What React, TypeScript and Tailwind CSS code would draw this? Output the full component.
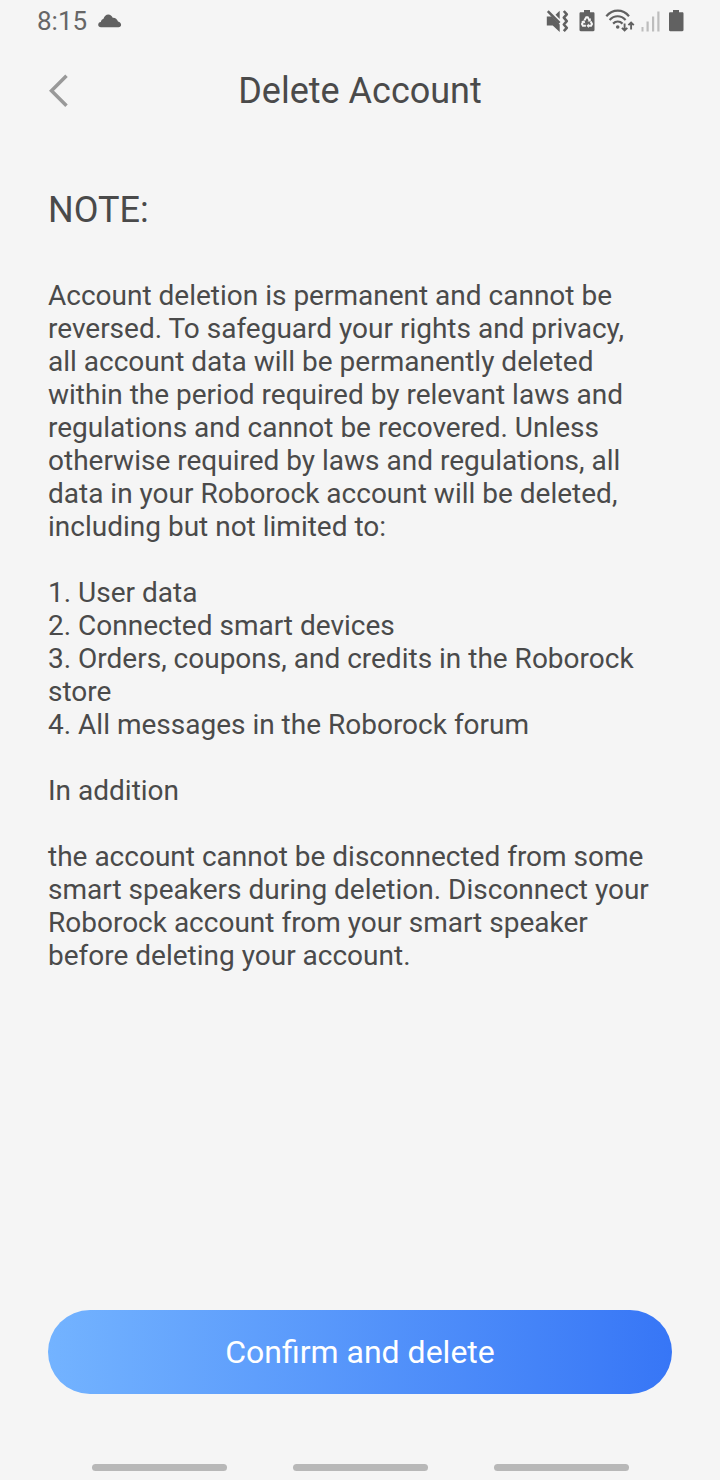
const items = [
  "User data",
  "Connected smart devices",
  "Orders, coupons, and credits in the Roborock store",
  "All messages in the Roborock forum",
];

function CloudIcon() {
  return (
    <svg width="24" height="14" viewBox="0 0 24 14" fill="#616161" role="img" aria-label="Cloud">
      <path d="M3 13.2C1.2 13.2.2 12.1.2 10.7c0-1.5 1.1-2.5 2.6-2.7C3.2 6 4.3 5.2 5.5 4.8 6.3 2.2 8 .4 10.3.4c2 0 3.7 1.300 4.400 3.300 2.400-.2 4.400 1 5.300 3.800 1.900.5 3.100 1.700 3.100 3.200 0 1.400-1 2.500-2.600 2.500z" />
    </svg>
  );
}

function MutedVibrateIcon() {
  return (
    <svg width="24" height="24" viewBox="0 0 24 24" role="img" aria-label="Muted, vibrate">
      <path d="M.8 7.500h5L13.700 15.500V23l-7-6.500H.8z" fill="#616161" />
      <path d="M13.700 1.800v8.200L9.500 5.800z" fill="#616161" />
      <path d="M1.800 2.200 13.500 14" stroke="#616161" strokeWidth="2.600" fill="none" />
      <path d="M17.800 2l3 3.300-3 3.400 3 3.400-3 3.400 3 3.300-3 3.400" stroke="#616161" strokeWidth="2.600" strokeLinejoin="round" fill="none" />
    </svg>
  );
}

function RecycleBatteryIcon() {
  return (
    <svg width="16" height="24" viewBox="0 0 16 24" role="img" aria-label="Battery saver">
      <path d="M5 1h6v2.200h3.300c.7 0 1.200.5 1.200 1.200V21c0 .7-.5 1.200-1.200 1.200H1.700C1 22.200.5 21.700.5 21V4.400c0-.7.5-1.200 1.200-1.200H5z" fill="#616161" />
      <g stroke="#f5f5f5" strokeWidth="2" fill="none">
        <path d="M5.500 11.200l1.800-3h1.400l1.800 3M4.300 12.600l-1.300 2.400.9 1.700h3M11.700 12.600l1.300 2.400-.9 1.700h-3" />
      </g>
      <path d="M11.800 9v3.500H8.500zM9.800 14.500v4.400l-2.300-2.200zM2.200 12.200l3.300-.9.800 3.200z" fill="#f5f5f5" />
    </svg>
  );
}

function WifiIcon() {
  return (
    <svg width="30" height="24" viewBox="0 0 30 24" role="img" aria-label="Wi-Fi">
      <g fill="none" stroke="#616161" strokeWidth="2.200">
        <path d="M1.300 7.200C7.800-.2 17.800-.2 24 7.200M4.600 11c4.600-5 11.400-5 16 0M8.100 14.600c2.800-2.800 6.600-2.800 9.400 0" />
        <path d="M19.600 14.500v7M16.900 18.800l2.700 2.700 2.700-2.700M26.100 20.500v-7M23.400 16.200l2.700-2.700 2.700 2.700" strokeWidth="1.900" />
      </g>
      <circle cx="12.700" cy="18" r="1.800" fill="#616161" />
    </svg>
  );
}

function SignalIcon() {
  return (
    <svg width="20" height="24" viewBox="0 0 20 24" fill="#bdbdbd" role="img" aria-label="Signal">
      <path d="M.5 18h2v4.500h-2zM5.500 12.500h2.200v10H5.500zM11 7.500h2.200v15H11zM16.300 2.500h2.200v20h-2.200z" />
    </svg>
  );
}

function BatteryIcon() {
  return (
    <svg width="16" height="24" viewBox="0 0 16 24" fill="#616161" role="img" aria-label="Battery">
      <path d="M5 1h6v2.200h3.300c.7 0 1.200.5 1.200 1.200V21c0 .7-.5 1.200-1.200 1.200H2.200C1.500 22.200 1 21.700 1 21V4.400c0-.7.5-1.200 1.200-1.200H5z" />
    </svg>
  );
}

export default function App() {
  return (
    <div className="flex min-h-screen flex-col bg-[#f5f5f5] font-[Roboto,sans-serif] text-[#4a4a4a]">
      <div className="flex h-[42px] items-center justify-between pr-9 pl-[37px] text-[#666]">
        <div className="flex items-center gap-[11px]">
          <span className="text-[26px] leading-8">8:15</span>
          <CloudIcon />
        </div>
        <div className="flex items-center">
          <MutedVibrateIcon />
          <span className="ml-[9px] flex"><RecycleBatteryIcon /></span>
          <span className="ml-[10px] flex"><WifiIcon /></span>
          <span className="ml-[6px] flex"><SignalIcon /></span>
          <span className="ml-[7px] flex"><BatteryIcon /></span>
        </div>
      </div>

      <header className="grid h-[98px] grid-cols-[48px_1fr_48px] items-center px-9">
        <button type="button" aria-label="Back" className="flex h-12 w-12 cursor-pointer items-center pl-3">
          <svg width="22" height="34" viewBox="0 0 22 34" fill="none" stroke="#999" strokeWidth="3.500">
            <path d="M18.500 1.800 3.500 16.800 18.500 31.800" />
          </svg>
        </button>
        <h1 className="text-center text-[36px] leading-[42px]">Delete Account</h1>
      </header>

      <main className="flex flex-1 flex-col pt-[49px] pr-16 pl-12 text-[28px] leading-[33px]">
        <h2 className="text-[36px] leading-[42px]">NOTE:</h2>
        <p className="mt-12">
          Account deletion is permanent and cannot be reversed. To safeguard your rights and privacy, all account data
          will be permanently deleted within the period required by relevant laws and regulations and cannot be
          recovered. Unless otherwise required by laws and regulations, all data in your Roborock account will be
          deleted, including but not limited to:
        </p>
        <ol className="mt-[33px] list-none">
          {items.map((item, i) => (
            <li key={item}>{`${i + 1}. ${item}`}</li>
          ))}
        </ol>
        <p className="mt-[33px]">In addition</p>
        <p className="mt-[33px]">
          the account cannot be disconnected from some smart speakers during deletion. Disconnect your Roborock account
          from your smart speaker before deleting your account.
        </p>
      </main>

      <footer className="px-12 pt-12">
        <button
          type="button"
          className="h-[84px] w-full cursor-pointer rounded-full bg-linear-to-r/srgb from-[#73b3ff] to-[#3776f6] text-[32px] leading-10 text-white"
        >
          Confirm and delete
        </button>
      </footer>
      <div className="mt-[70px] mb-[9px] flex justify-center gap-[66px]" aria-hidden="true">
        <span className="h-[7px] w-[135px] rounded-full bg-[#b8b8b8]" />
        <span className="h-[7px] w-[135px] rounded-full bg-[#b8b8b8]" />
        <span className="h-[7px] w-[135px] rounded-full bg-[#b8b8b8]" />
      </div>
    </div>
  );
}
